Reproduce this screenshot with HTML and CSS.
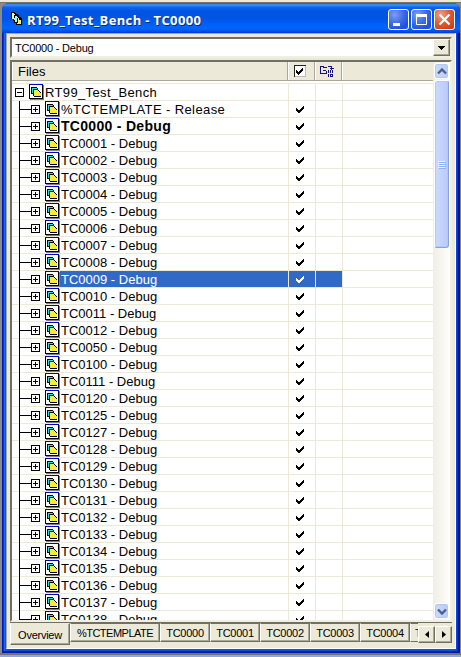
FILE: index.html
```html
<!DOCTYPE html>
<html lang="en">
<head>
<meta charset="utf-8">
<title>RT99_Test_Bench - TC0000</title>
<link rel="stylesheet" href="styles.css">
</head>
<body>
<svg class="defs" width="0" height="0" shape-rendering="crispEdges">
  <symbol id="project" viewBox="0 0 15 16">
    <path fill="#808080" d="M1 1h14v15H1z"/><path fill="#000" d="M0 0h14v15H0z"/>
    <path class="paper" d="M1 2h12v12H1z"/><path fill="#0000c0" d="M0 0h14v1H0z"/><path class="paper" d="M1 1h12v1H1z"/>
    <path d="M2 3h6v1h1v6H2z"/><path fill="#20e0e8" d="M3 4h5v5H3z"/>
    <path d="M4 5h5v1h1v1h1v1h1v5H5v-1H4z"/><path fill="#f6ec40" d="M5 6h4v1h1v1h1v1h1v3H5z"/>
  </symbol>
  <symbol id="tick" viewBox="0 0 8 8"><path fill="currentColor" d="M0 2h1v1h1v1h1v-0h1V3h1V2h1V1h1V0h1v3H7v1H6v1H5v1H4v1H2V6H1V5H0z"/></symbol>
  <symbol id="plus" viewBox="0 0 9 9"><path fill="#fff" stroke="#000" d="M.5.5h8v8h-8z"/><path stroke="#000" d="M2 4.500h5M4.500 2v5"/></symbol>
  <symbol id="minus" viewBox="0 0 9 9"><path fill="#fff" stroke="#000" d="M.5.5h8v8h-8z"/><path stroke="#000" d="M2 4.500h5"/></symbol>
</svg>
<main class="window">
  <header class="titlebar">
    <svg class="app-icon" width="12" height="14" viewBox="0 0 12 14" shape-rendering="crispEdges"><path d="M0 0h4v1h1v1h2v1h1v2h2v1h1v7H5v-2H3V9H2V7H0z"/><path fill="#fff79a" d="M1 1h2v1h1v1H3v4H1z"/><path fill="#9ff" d="M4 4h2v1h1v1H6v4H4V8H3V6h1z"/><path fill="#ffef70" d="M7 6h1v2h2v4H6v-1h1z"/></svg>
    <h1>RT99_Test_Bench - TC0000</h1>
    <div class="controls">
      <button class="ctl"><svg viewBox="0 0 21 21"><path fill="#fff" d="M5 14h7v3H5z"/></svg></button>
      <button class="ctl"><svg viewBox="0 0 21 21"><path fill="none" stroke="#fff" d="M5.500 6v9.500h10V6"/><path fill="#fff" d="M5 5h11v3H5z"/></svg></button>
      <button class="ctl close"><svg viewBox="0 0 21 21"><path stroke="#fff" stroke-width="2.200" d="M5.500 5.500l10 10m0-10l-10 10"/></svg></button>
    </div>
  </header>
  <div class="client">
    <div class="combo"><span>TC0000 - Debug</span><button class="raised"><svg width="7" height="4" shape-rendering="crispEdges"><path d="M0 0h7v1H6v1H5v1H4v1H3V3H2V2H1V1H0z"/></svg></button></div>
    <div class="panel">
      <div class="list">
        <div class="head">
          <div class="cell name">Files</div>
          <div class="cell check"><svg width="12" height="12" shape-rendering="crispEdges"><path fill="#fff" d="M0 0h12v12H0z"/><path fill="none" stroke="#222" d="M.5 12V.5H12"/><path fill="none" stroke="#bbb" d="M1 11.500h10.500V1"/><path d="M2 5h1v1h1v1h1V6h1V5h1V4h1V3h1v3H8v1H7v1H6v1H5v1H4V9H3V8H2z"/></svg></div>
          <div class="cell build"><svg width="14" height="13" fill="none" stroke="#14147c" shape-rendering="crispEdges"><path d="M.5 8.500v-7h3v1h3M.5 8.500h6v-3M3 5.500h3M8 1.500h3v3M9.500 3.500h4M8.500 5v3M10.500 5v3M12.500 5v3M8.500 9v3M10 9.500h3M10 11.500h3M10.500 9v3M12.500 9v3"/></svg></div>
          <div class="cell"></div>
        </div>
        <div class="rows" id="rows"></div>
      </div>
      <div class="scroll">
        <div class="arrow"><svg width="10" height="7"><path d="M1 5.500l4-4 4 4"/></svg></div>
        <div class="thumb"><i></i><i></i><i></i><i></i></div>
        <div class="arrow down"><svg width="10" height="7"><path d="M1 1.500l4 4 4-4"/></svg></div>
      </div>
    </div>
    <div class="tabs">
      <div class="tab active">Overview</div>
      <div class="tab wide">%TCTEMPLATE</div>
      <div class="tab">TC0000</div><div class="tab">TC0001</div><div class="tab">TC0002</div><div class="tab">TC0003</div><div class="tab">TC0004</div>
      <div class="tab cut">TC0005</div>
      <button class="raised nav"><svg width="4" height="7"><path d="M4 0v7L0 3.500z"/></svg></button>
      <button class="raised nav"><svg width="4" height="7"><path d="M0 0v7l4-3.500z"/></svg></button>
    </div>
  </div>
</main>
<script src="tree.js"></script>
</body>
</html>
```
FILE: tree.js
```js
const ids = ['0000','0001','0002','0003','0004','0005','0006','0007','0008','0009','0010','0011','0012','0050','0100','0111','0120','0125','0127','0128','0129','0130','0131','0132','0133','0134','0135','0136','0137','0138'];
const items = ['%TCTEMPLATE - Release', ...ids.map(id => `TC${id} - Debug`)];
const icon = (name, w, h, cls = '') => `<svg class="${cls}" width="${w}" height="${h}" shape-rendering="crispEdges"><use href="#${name}"/></svg>`;
const row = (cls, tree, label, mark) => `<div class="row ${cls}"><div class="tree">${tree}<span class="label">${label}</span></div><div class="mark">${mark}</div><div class="mark"></div><div></div></div>`;
let html = row('root', icon('minus', 9, 9, 'toggle') + icon('project', 15, 16, 'project'), 'RT99_Test_Bench', '');
items.forEach((text, i) => {
  const cls = i === 0 ? 'template' : i === 1 ? 'bold' : text.includes('0009') ? 'selected' : '';
  html += row(cls, '<i class="branch"></i>' + icon('plus', 9, 9, 'toggle') + icon('project', 15, 16, 'project'), text, icon('tick', 8, 8));
});
document.getElementById('rows').innerHTML = html;
```
FILE: styles.css
```css
* { box-sizing: border-box; }
body { margin: 0; width: 461px; height: 657px; overflow: hidden; padding: 3px 1px 4px 2px; background: linear-gradient(#ece9d8 0 2px, #77746c 2px 3px, #8c8a84 3px 653px, #77746c 653px 655px, #8ba6e8 655px); font: 13px "Liberation Sans", sans-serif; color: #000; }
.defs { position: absolute; }
svg { display: block; flex: none; }
button { padding: 0; margin: 0; display: flex; align-items: center; justify-content: center; flex: none; }
.window { width: 458px; height: 650px; border-radius: 7px 7px 0 0; background: linear-gradient(90deg, #0019cf 0 1px, #0831d9 1px 2px, #166aee 2px 3px, #0855dd 3px 454px, #0048f1 454px 455px, #0030d0 455px 456px, #001590 456px); padding: 0 4px 4px; overflow: hidden; border-bottom: 2px solid #001fa0; }
.titlebar { height: 30px; margin: 0 -4px; padding: 0 5px 0 9px; display: flex; align-items: center; background: linear-gradient(#0f5ad8 0, #3d95ff 2px, #1264ee 4px, #0055e5 8px, #0054e3 15px, #005cf5 20px, #0066ff 25px, #005bf0 27px, #003dd0 30px); }
.app-icon { margin-top: 1px; }
h1 { margin: 4px 0 0 4px; flex: 1; color: #fff; font: bold 13px "Open Sans", sans-serif; letter-spacing: .36px; text-shadow: 1px 1px #0a2a80; white-space: nowrap; }
.controls { display: flex; gap: 2px; margin-top: 3px; }
.ctl { width: 21px; height: 21px; border: 1px solid #fff; border-radius: 3px; background: radial-gradient(circle at 30% 25%, #7b9ff0, #3c6ce8 45%, #1e4fdc 80%, #2c64ef); }
.ctl svg { width: 21px; height: 21px; }
.close { background: radial-gradient(circle at 30% 25%, #f0a088, #e25a38 45%, #cf3a12 90%); }
.client { height: 616px; background: #ece9d8; border: 1px solid; border-color: #aca899 #fff #fff #aca899; padding: 3px 3px 2px; display: flex; flex-direction: column; }
.combo { height: 21px; display: flex; background: #fff; border: 2px solid; border-color: #716f64 #f1efe2 #f1efe2 #716f64; font-size: 11px; letter-spacing: -.2px; line-height: 18px; padding-left: 3px; }
.combo span { flex: 1; }
.raised { background: #ece9d8; border: 1px solid; border-color: #fff #716f64 #716f64 #fff; box-shadow: inset -1px -1px #aca899; }
.combo .raised { width: 17px; height: 17px; }
.panel { height: 562px; margin-top: 2px; border: 2px solid; border-color: #716f64 #f1efe2 #f1efe2 #716f64; display: flex; background: #fff; }
.list { flex: 1; min-width: 0; height: 558px; overflow: hidden; }
.head { display: flex; height: 19px; background: #ece9d8; border-bottom: 1px solid #aca899; }
.cell { width: 27px; display: flex; align-items: center; justify-content: center; border-right: 1px solid #aca899; border-left: 1px solid #fff; }
.cell.name { width: 276px; justify-content: flex-start; padding-left: 5px; }
.cell.check, .cell.build { padding-right: 3px; }
.cell:last-child { flex: 1; border-right: 0; }
.rows { margin-top: 2px; border-top: 1px solid #ece9d8; }
.row { display: flex; height: 17px; border-bottom: 1px solid #ece9d8; }
.row > * + * { border-left: 1px solid #ece9d8; }
.tree { width: 276px; display: flex; align-items: center; height: 17px; }
.mark { width: 27px; height: 16px; padding: 5px 0 0 7px; }
.branch { width: 12px; height: 17px; margin-left: 7px; background: linear-gradient(#000, #000) 0 0 / 1px 17px no-repeat, linear-gradient(#000, #000) 0 8px / 12px 1px no-repeat; }
.toggle { margin-right: 5px; }
.root .toggle { margin-left: 3px; }
.project { align-self: flex-start; }
.paper { fill: #fff; }
.label { flex: 1; height: 16px; line-height: 17px; padding-left: 1px; white-space: nowrap; align-self: flex-start; }
.root .label { letter-spacing: .36px; }
.template .label { letter-spacing: .4px; }
.bold .label { font-weight: bold; font-size: 14px; letter-spacing: .3px; }
.selected .label, .selected .mark { background: #316ac5; color: #fff; }
.scroll { width: 17px; display: flex; flex-direction: column; background: linear-gradient(90deg, #efeee6, #fefefb); padding: 1px 1px 0; }
.arrow, .thumb { border: 1px solid #fff; border-radius: 3px; background: linear-gradient(90deg, #cbdafe, #b9cbf8); box-shadow: inset 0 0 0 1px #b4c8f6; }
.arrow { height: 16px; display: flex; align-items: center; justify-content: center; }
.arrow path { fill: none; stroke: #4d6185; stroke-width: 2.4; }
.down { margin-top: auto; margin-bottom: 1px; }
.thumb { height: 168px; margin-top: 1px; display: flex; flex-direction: column; align-items: center; justify-content: center; gap: 1px; border-right-color: #86a4da; border-bottom-color: #86a4da; }
.thumb i { width: 7px; height: 1px; background: #eef4fe; box-shadow: 1px 1px #8cb0f8; }
.tabs { height: 24px; display: flex; align-items: flex-start; border-top: 1px solid #716f64; font-size: 11px; }
.tab { width: 50px; height: 19px; line-height: 18px; text-align: center; background: #ece9d8; border: 1px solid; border-color: #716f64 #716f64 #716f64 #fff; box-shadow: inset -1px -1px #aca899; white-space: nowrap; overflow: hidden; letter-spacing: -.25px; flex: none; }
.tab.active { width: 60px; height: 22px; line-height: 22px; border-top-color: #ece9d8; }
.tab.wide { width: 90px; letter-spacing: -.5px; }
.tab.cut { width: auto; flex: 1; min-width: 0; text-align: left; padding-left: 4px; border-right: 0; box-shadow: none; }
.nav { width: 17px; height: 17px; margin-top: 3px; }
```
